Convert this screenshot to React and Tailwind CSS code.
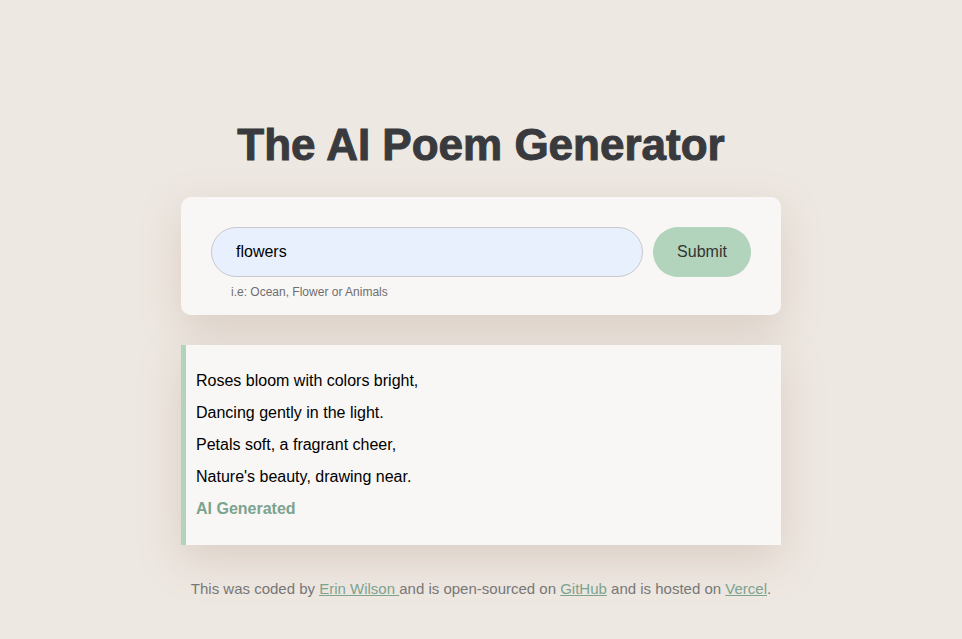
export default function App() {
  return (
    <div className="min-h-screen bg-[#eee8e2] font-['Liberation_Sans',Arial,sans-serif]">
      <div className="mx-auto w-[600px] pt-[118px]">
        <h1 className="text-center text-[44px] leading-[54px] font-bold text-[#393a3e] [-webkit-text-stroke:1px_#393a3e]">
          The AI Poem Generator
        </h1>

        <form className="mt-[25px] rounded-[10px] bg-[#f9f7f5] px-[30px] pt-[30px] pb-[14px] shadow-[0_14px_40px_rgba(160,130,110,0.25)]">
          <div className="flex items-center gap-[10px]">
            <input
              type="text"
              defaultValue="flowers"
              className="h-[50px] w-[432px] rounded-full border border-[#c8c8cc] bg-[#e8f0fe] px-[24px] text-[16px] text-black outline-none"
            />
            <button
              type="submit"
              className="h-[50px] w-[98px] rounded-full bg-[#b2d3bc] text-[16px] text-[#333]"
            >
              Submit
            </button>
          </div>
          <div className="mt-[6px] pl-[20px] text-[12px] text-[#6e6e6e]">
            i.e: Ocean, Flower or Animals
          </div>
        </form>

        <div className="mt-[30px] border-l-[5px] border-[#b2d3bc] bg-[#f9f7f5] px-[10px] pt-[20px] pb-[20px] text-[16px] leading-[32px] text-black shadow-[0_14px_40px_rgba(160,130,110,0.25)]">
          <div>Roses bloom with colors bright,</div>
          <div>Dancing gently in the light.</div>
          <div>Petals soft, a fragrant cheer,</div>
          <div>Nature's beauty, drawing near.</div>
          <div className="font-bold text-[#7ba38f]">AI Generated</div>
        </div>

        <p className="mt-[33px] text-center text-[15px] text-[#777]">
          This was coded by{" "}
          <a href="#" className="text-[#7ba38f] underline">
            Erin Wilson{" "}
          </a>
          and is open-sourced on{" "}
          <a href="#" className="text-[#7ba38f] underline">
            GitHub
          </a>{" "}
          and is hosted on{" "}
          <a href="#" className="text-[#7ba38f] underline">
            Vercel
          </a>
          .
        </p>
      </div>
    </div>
  );
}
